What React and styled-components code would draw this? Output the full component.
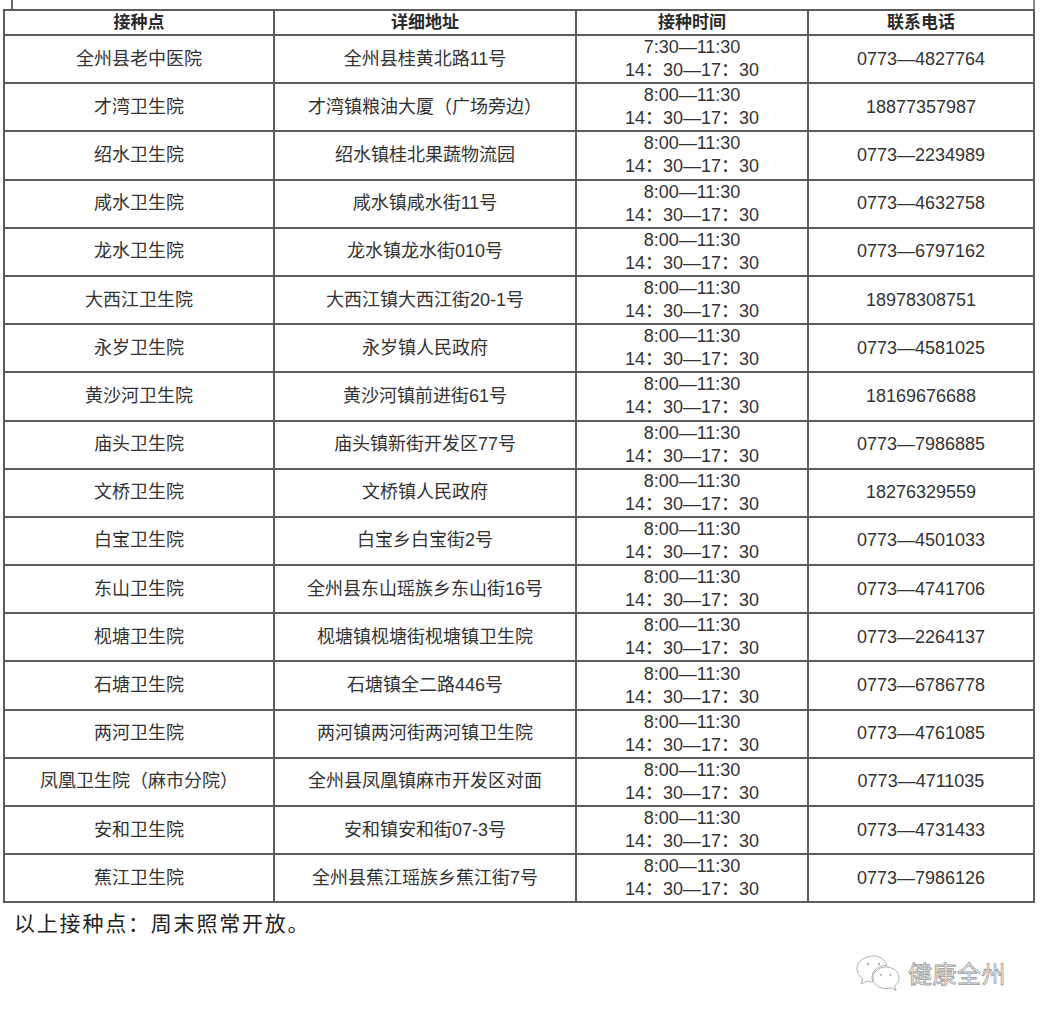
import React from 'react';
import styled, { createGlobalStyle } from 'styled-components';

const GlobalStyle = createGlobalStyle`
  html, body {
    margin: 0;
    padding: 0;
    background: #fff;
  }
  body {
    font-family: "Liberation Sans", "Noto Sans CJK SC", sans-serif;
    color: #333;
  }
`;

const Page = styled.div`
  width: 1040px;
  height: 1020px;
  padding-left: 3px;
  box-sizing: border-box;
  background: #fff;
  overflow: hidden;
`;

const TopMarks = styled.div`
  display: flex;
  justify-content: space-between;
  height: 9px;
  padding: 0 0 0 8px;
  width: 1032px;
  box-sizing: border-box;
`;

const Mark = styled.span`
  display: block;
  width: 2px;
  height: 9px;
  background: ${(p) => p.$color || '#666'};
`;

const Table = styled.table`
  border-collapse: separate;
  border-spacing: 0;
  border-top: 2px solid #5c5c5c;
  border-left: 2px solid #5c5c5c;
  table-layout: fixed;
  width: 1032px;
`;

const HeadCell = styled.th`
  height: 23px;
  padding: 0;
  border-right: 2px solid #5c5c5c;
  border-bottom: 2px solid #5c5c5c;
  font-size: 17px;
  font-weight: 700;
  color: #2a2a2a;
  text-align: center;
  line-height: 23px;
`;

const Cell = styled.td`
  height: 46.2px;
  padding: 0;
  border-right: 2px solid #5c5c5c;
  border-bottom: 2px solid #5c5c5c;
  font-size: 18px;
  color: #333;
  text-align: center;
  vertical-align: middle;
  line-height: 23px;
  white-space: nowrap;
`;

const TimeLine = styled.div`
  line-height: 23px;
`;

const Note = styled.p`
  margin: 4px 0 0 11px;
  font-family: "Noto Sans CJK SC", sans-serif;
  font-size: 21px;
  line-height: 30px;
  letter-spacing: 1.8px;
  color: #222;
`;

const Watermark = styled.div`
  display: flex;
  align-items: center;
  justify-content: flex-end;
  gap: 8px;
  margin-top: 17px;
  padding-right: 34px;
`;

const WatermarkText = styled.span`
  font-family: "Noto Sans CJK SC", sans-serif;
  font-size: 24px;
  line-height: 34px;
  color: #fff;
  -webkit-text-stroke: 0.8px #9a9a9a;
  letter-spacing: 0.5px;
`;

const WeChatIcon = () => (
  <svg width="44" height="38" viewBox="0 0 44 38" fill="none" stroke="#b0b0b0" strokeWidth="1">
    <path d="M18 2 C8 2 1 8 1 15 C1 19 3 22 7 25 L5 30 L11 27 C13 28 15 28 17 28 C16.5 27 16 25 16 23.5 C16 16 23 11 31 11.5 C29 6 24 2 18 2 Z" fill="#fff" />
    <circle cx="12" cy="10" r="1.2" fill="#b0b0b0" stroke="none" />
    <circle cx="23" cy="10" r="1.2" fill="#b0b0b0" stroke="none" />
    <path d="M30 13 C22.5 13 17 18 17 24 C17 30 22.5 34.5 30 34.5 C32 34.5 33.5 34.2 35 33.7 L40 36.5 L38.5 32 C41.5 30 43 27 43 24 C43 18 37.5 13 30 13 Z" fill="#fff" />
    <circle cx="25" cy="21" r="1.1" fill="#b0b0b0" stroke="none" />
    <circle cx="34.5" cy="21" r="1.1" fill="#b0b0b0" stroke="none" />
  </svg>
);

const columns = [
  { title: '接种点', width: 270 },
  { title: '详细地址', width: 302 },
  { title: '接种时间', width: 232 },
  { title: '联系电话', width: 226 },
];

const rows = [
  ['全州县老中医院', '全州县桂黄北路11号', '7:30—11:30', '0773—4827764'],
  ['才湾卫生院', '才湾镇粮油大厦（广场旁边）', '8:00—11:30', '18877357987'],
  ['绍水卫生院', '绍水镇桂北果蔬物流园', '8:00—11:30', '0773—2234989'],
  ['咸水卫生院', '咸水镇咸水街11号', '8:00—11:30', '0773—4632758'],
  ['龙水卫生院', '龙水镇龙水街010号', '8:00—11:30', '0773—6797162'],
  ['大西江卫生院', '大西江镇大西江街20-1号', '8:00—11:30', '18978308751'],
  ['永岁卫生院', '永岁镇人民政府', '8:00—11:30', '0773—4581025'],
  ['黄沙河卫生院', '黄沙河镇前进街61号', '8:00—11:30', '18169676688'],
  ['庙头卫生院', '庙头镇新街开发区77号', '8:00—11:30', '0773—7986885'],
  ['文桥卫生院', '文桥镇人民政府', '8:00—11:30', '18276329559'],
  ['白宝卫生院', '白宝乡白宝街2号', '8:00—11:30', '0773—4501033'],
  ['东山卫生院', '全州县东山瑶族乡东山街16号', '8:00—11:30', '0773—4741706'],
  ['枧塘卫生院', '枧塘镇枧塘街枧塘镇卫生院', '8:00—11:30', '0773—2264137'],
  ['石塘卫生院', '石塘镇全二路446号', '8:00—11:30', '0773—6786778'],
  ['两河卫生院', '两河镇两河街两河镇卫生院', '8:00—11:30', '0773—4761085'],
  ['凤凰卫生院（麻市分院）', '全州县凤凰镇麻市开发区对面', '8:00—11:30', '0773—4711035'],
  ['安和卫生院', '安和镇安和街07-3号', '8:00—11:30', '0773—4731433'],
  ['蕉江卫生院', '全州县蕉江瑶族乡蕉江街7号', '8:00—11:30', '0773—7986126'],
];

const afternoon = '14：30—17：30';

const App = () => (
  <Page>
    <GlobalStyle />
    <TopMarks>
      <Mark />
      <Mark $color="#888" />
    </TopMarks>
    <Table>
      <colgroup>
        {columns.map((c) => (
          <col key={c.title} style={{ width: c.width }} />
        ))}
      </colgroup>
      <thead>
        <tr>
          {columns.map((c) => (
            <HeadCell key={c.title}>{c.title}</HeadCell>
          ))}
        </tr>
      </thead>
      <tbody>
        {rows.map(([name, addr, morning, phone]) => (
          <tr key={name}>
            <Cell>{name}</Cell>
            <Cell>{addr}</Cell>
            <Cell>
              <TimeLine>{morning}</TimeLine>
              <TimeLine>{afternoon}</TimeLine>
            </Cell>
            <Cell>{phone}</Cell>
          </tr>
        ))}
      </tbody>
    </Table>
    <Note>以上接种点：周末照常开放。</Note>
    <Watermark>
      <WeChatIcon />
      <WatermarkText>健康全州</WatermarkText>
    </Watermark>
  </Page>
);

export default App;
